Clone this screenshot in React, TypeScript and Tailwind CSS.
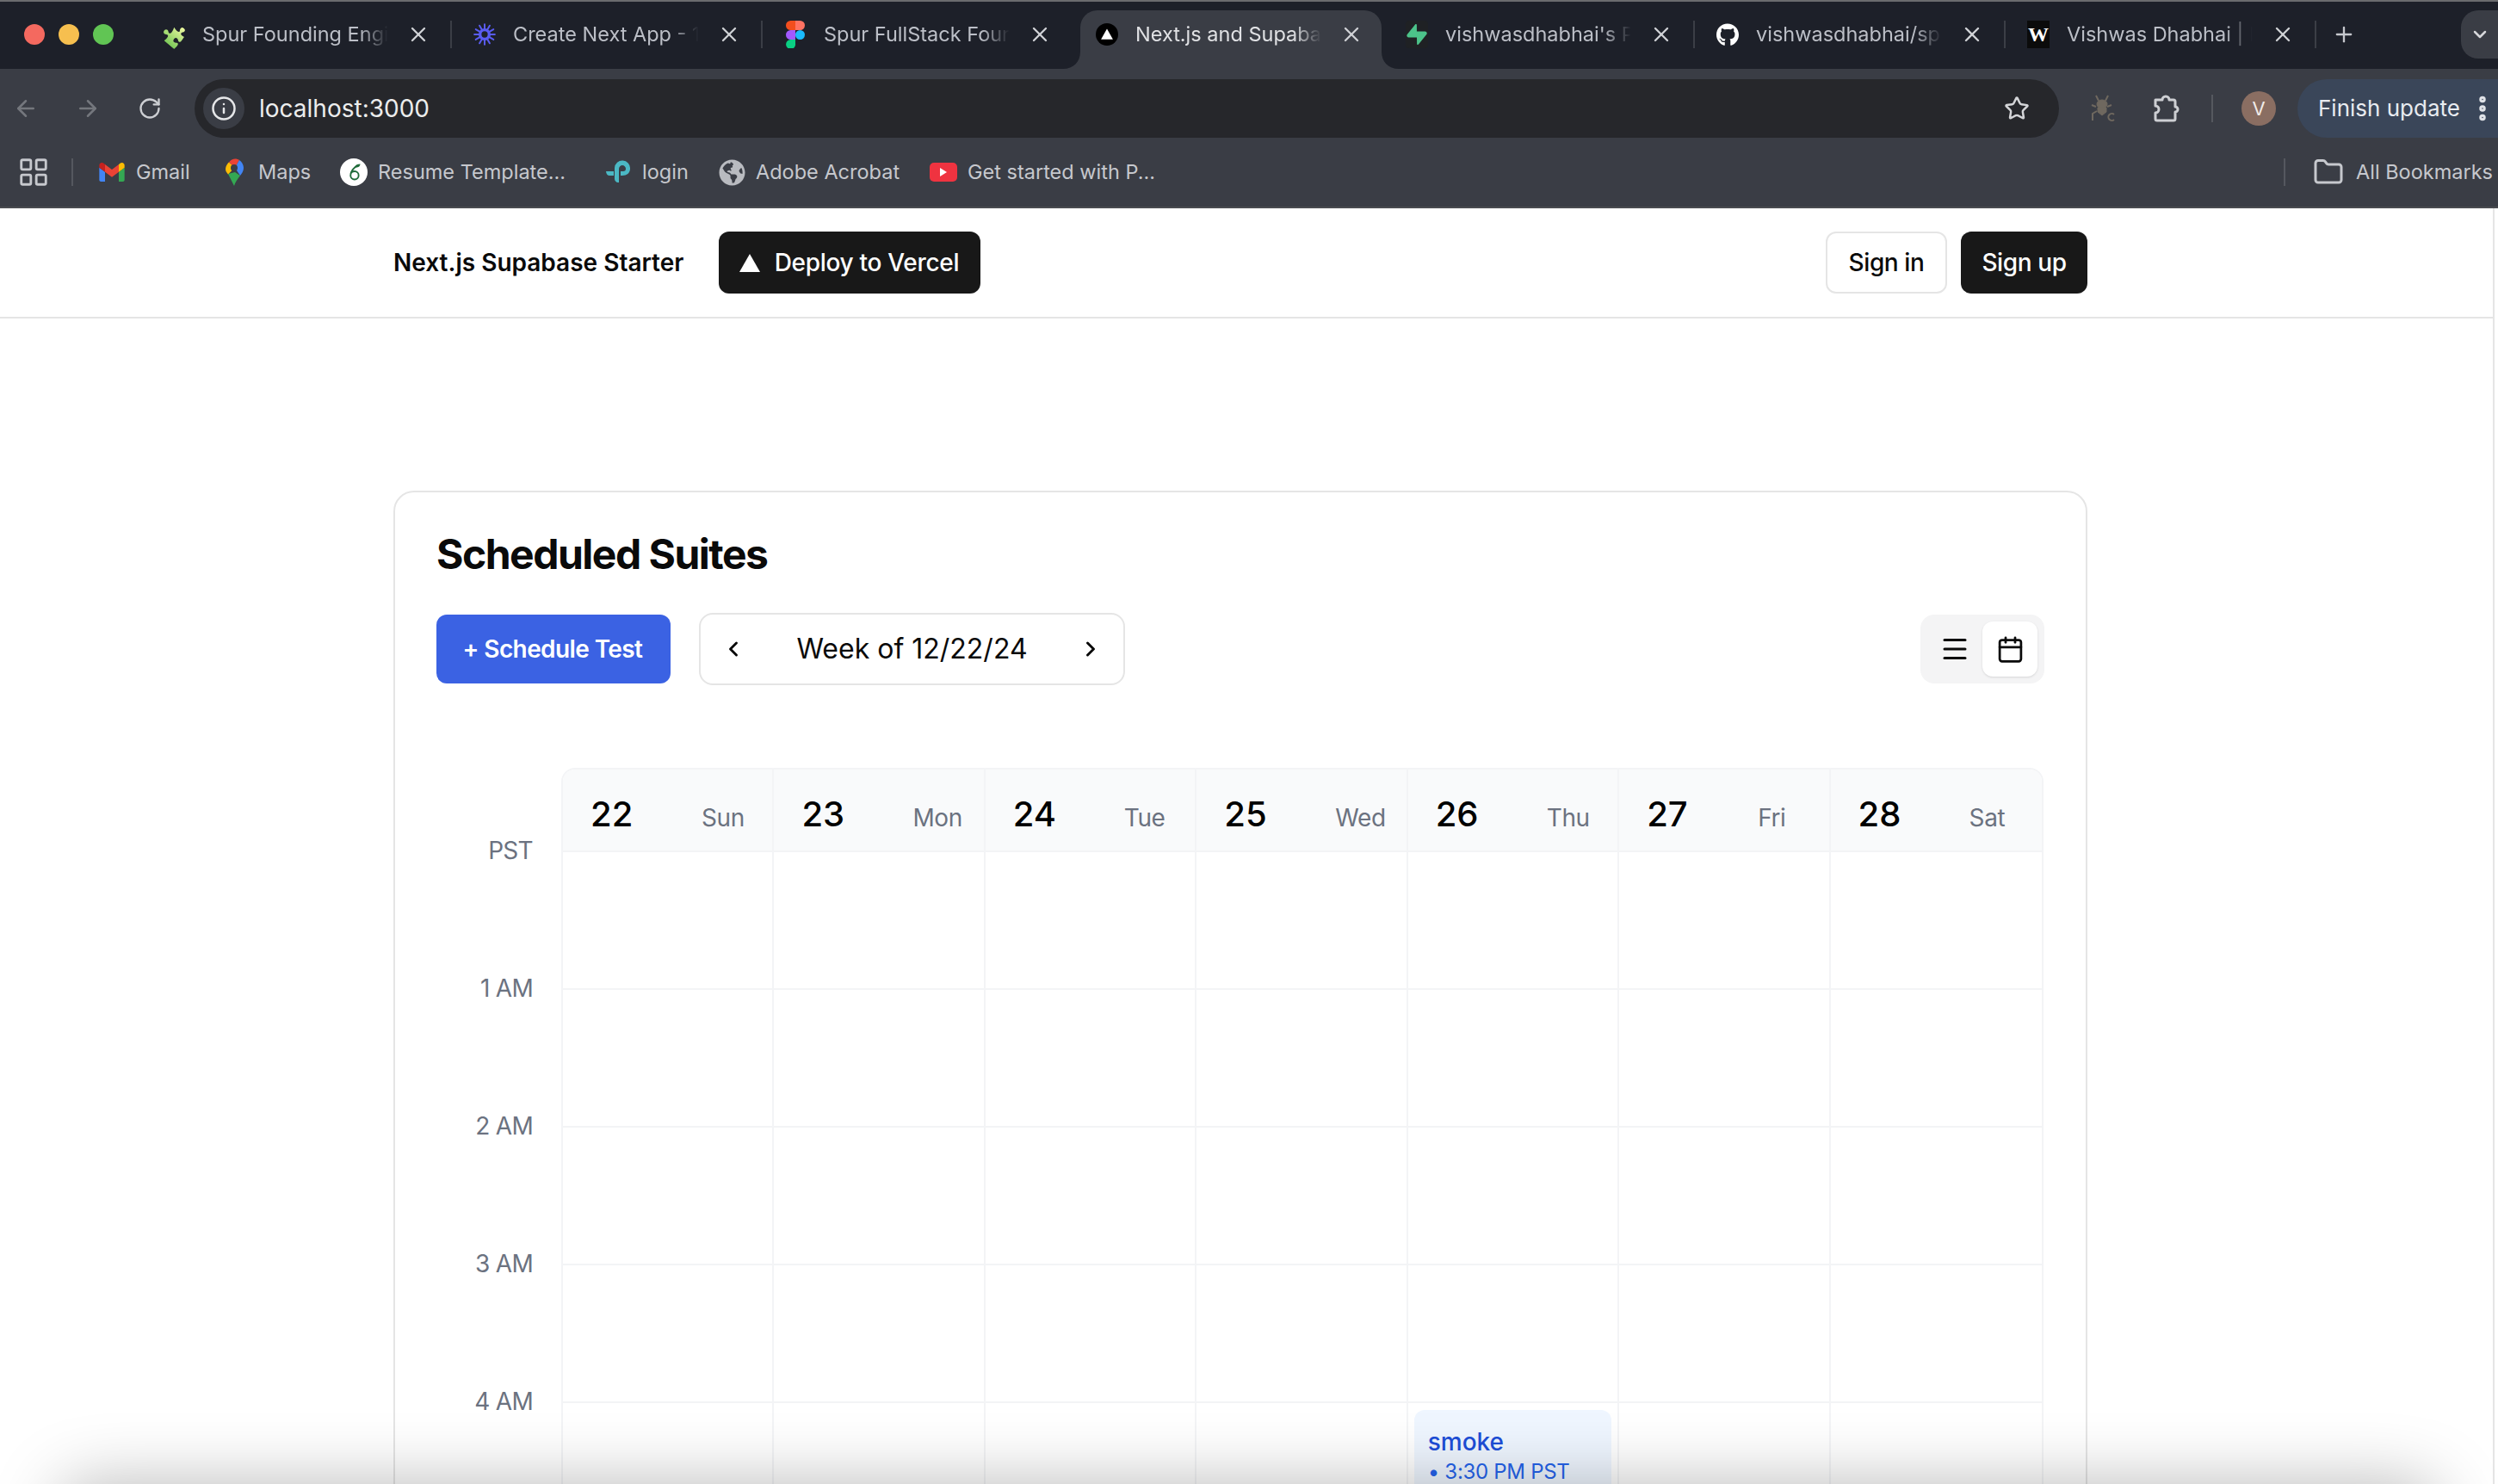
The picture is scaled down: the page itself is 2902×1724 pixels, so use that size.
import React from 'react';
import { ArrowLeft, ArrowRight, Calendar, ChevronDown, ChevronLeft, ChevronRight, EllipsisVertical, Folder, Info, LayoutGrid, Menu, Plus, RotateCw, Star, X } from 'lucide-react';
import { FaGithub, FaGlobeAmericas, FaPuzzlePiece } from 'react-icons/fa';
import { SiSupabase } from 'react-icons/si';

const SpurIcon = () => <FaPuzzlePiece size={36} fill="url(#spurGrad)" className="-rotate-[50deg]" />;

const SunIcon = () => (
  <svg width="36" height="36" viewBox="0 0 34 34" stroke="#5a5cf2" strokeWidth="2.600" strokeLinecap="round">
    {[0, 30, 60, 90, 120, 150, 180, 210, 240, 270, 300, 330].map((a) => (
      <line key={a} x1="17" y1="1.500" x2="17" y2="10" transform={`rotate(${a} 17 17)`} />
    ))}
    <circle cx="17" cy="17" r="7" fill="none" strokeWidth="4.500" />
  </svg>
);

const FigmaIcon = () => (
  <svg width="22" height="32" viewBox="0 0 22 32">
    <path fill="#f24e1e" d="M11 0H5.500a5.500 5.500 0 0 0 0 11H11z" />
    <path fill="#ff7262" d="M11 0h5.500a5.500 5.500 0 0 1 0 11H11z" />
    <path fill="#a259ff" d="M11 11H5.500a5.500 5.500 0 0 0 0 11H11z" />
    <circle fill="#1abcfe" cx="16.500" cy="16.500" r="5.500" />
    <path fill="#0acf83" d="M5.500 22H11v4.500a5.500 5.500 0 1 1-5.500-4.500z" />
  </svg>
);

const VercelCircle = () => (
  <svg width="32" height="32" viewBox="0 0 32 32">
    <circle cx="16" cy="16" r="16" fill="#000" />
    <path d="M16 8l8.500 15h-17z" fill="#fff" />
  </svg>
);

const SupabaseIcon = () => (
  <span className="flex h-[32px] w-[32px] items-center justify-center rounded-[4px] bg-[#1f2124]">
    <SiSupabase size={24} color="#4cc38a" />
  </span>
);

const WixIcon = () => (
  <span className="flex h-[32px] w-[32px] items-center justify-center bg-[#0b0b0b] text-[24px] font-bold leading-none text-white [font-family:'Liberation_Serif',serif]">W</span>
);

const GmailIcon = () => (
  <svg width="30" height="22" viewBox="52 42 88 66">
    <path fill="#4285f4" d="M58 108h14V74L52 59v43c0 3.320 2.690 6 6 6" />
    <path fill="#34a853" d="M120 108h14c3.320 0 6-2.690 6-6V59l-20 15" />
    <path fill="#fbbc04" d="M120 48v26l20-15v-8c0-7.420-8.470-11.650-14.400-7.200" />
    <path fill="#ea4335" d="M72 74V48l24 18 24-18v26L96 92" />
    <path fill="#c5221f" d="M52 51v8l20 15V48l-5.600-4.200c-5.940-4.450-14.400-.22-14.400 7.200" />
  </svg>
);

const MapsIcon = () => (
  <svg width="22" height="32" viewBox="0 0 22 32">
    <path fill="#34a853" d="M4 18l7 14c1-4 4-8 7-12l-6-4z" />
    <path fill="#fbbc04" d="M1.500 15c.6 1.200 1.500 2.400 2.500 3.500l8-8-7-6C2.500 6.500 0 11 1.500 15z" />
    <path fill="#ea4335" d="M5 4.500L12 11l5-9C13.500-.5 8 0 5 4.500z" />
    <path fill="#4285f4" d="M17 2l-5 9 6 9c2-2.500 4-5.500 4-9 0-3.500-2-7-5-9z" />
    <circle cx="11" cy="11" r="4" fill="#3a3d45" />
  </svg>
);

const ResumeIcon = () => (
  <svg width="34" height="34" viewBox="0 0 34 34">
    <circle cx="17" cy="17" r="17" fill="#fff" />
    <path d="M22 9c-5 2-9 7-9 12a5 5 0 1 0 5-5c-2 0-4 1-5 3" fill="none" stroke="#1f6b3a" strokeWidth="2" />
    <path d="M18 11c1-3 4-4 7-4 0 3-3 5-7 4z" fill="#1f6b3a" />
  </svg>
);

const LoginIcon = () => (
  <svg width="28" height="28" viewBox="0 0 28 28" fill="#4bb8c4">
    <path d="M10 9a9 9 0 0 1 18 1c0 5-4 8-9 8h-2v-5h3c2 0 3-1 3-3s-2-4-4-4-4 2-4 4v16h-1c-2 0-4-2-4-4V9z" />
    <path d="M0 13h9v5H4c-2 0-4-2-4-5z" />
  </svg>
);

const YoutubeIcon = () => (
  <span className="flex h-[22px] w-[32px] items-center justify-center rounded-[5px] bg-[#ef3340]">
    <span className="h-0 w-0 border-y-[5px] border-l-[8px] border-y-transparent border-l-white" />
  </span>
);

const BugIcon = () => (
  <svg width="28" height="32" viewBox="0 0 28 32" fill="#6f685f" stroke="#6f685f">
    <ellipse cx="13" cy="11" rx="6" ry="5" />
    <path d="M8 15h10v5l-5 4-5-4z" />
    <path d="M9 7L6 1M17 7l3-6M6 14L1 12M7 19l-5 3v8M19 14l5-2" fill="none" strokeWidth="2" />
    <path d="M27 23a4 4 0 1 0 0 6" fill="none" strokeWidth="2" />
  </svg>
);

const ExtensionIcon = () => (
  <svg width="32" height="34" viewBox="0 0 32 34" fill="none" stroke="#cdcfd3" strokeWidth="3" strokeLinejoin="round">
    <path d="M4 7h8a4 4 0 0 1 8 0h5a2 2 0 0 1 2 2v6a3 3 0 0 1 0 6v8a2 2 0 0 1-2 2H6a2 2 0 0 1-2-2v-7a4 4 0 0 0 0-8z" />
  </svg>
);

const tabs = [
  { title: 'Spur Founding Engineer', icon: <SpurIcon />, sep: true },
  { title: 'Create Next App - 127.0', icon: <SunIcon />, sep: true },
  { title: 'Spur FullStack Founding', icon: <FigmaIcon />, sep: false },
  { title: 'Next.js and Supabase Starter', icon: <VercelCircle />, sep: false, active: true },
  { title: "vishwasdhabhai's Project", icon: <SupabaseIcon />, sep: true },
  { title: 'vishwasdhabhai/spur-assign', icon: <FaGithub size={33} color="#fff" />, sep: true },
  { title: 'Vishwas Dhabhai | Portfolio', icon: <WixIcon />, sep: true },
];

const bookmarks = [
  { label: 'Gmail', icon: <GmailIcon />, cls: 'w-[142px]' },
  { label: 'Maps', icon: <MapsIcon />, cls: 'w-[139px]' },
  { label: 'Resume Template...', icon: <ResumeIcon />, cls: 'w-[307px]' },
  { label: 'login', icon: <LoginIcon />, cls: 'w-[132px]' },
  { label: 'Adobe Acrobat', icon: <FaGlobeAmericas size={31} color="#b9bbc0" />, cls: 'w-[246px]' },
  { label: 'Get started with P...', icon: <YoutubeIcon />, cls: 'w-[280px]' },
];

const days = [
  { n: 22, d: 'Sun' },
  { n: 23, d: 'Mon' },
  { n: 24, d: 'Tue' },
  { n: 25, d: 'Wed' },
  { n: 26, d: 'Thu' },
  { n: 27, d: 'Fri' },
  { n: 28, d: 'Sat' },
];

const hours = ['1 AM', '2 AM', '3 AM', '4 AM'];

const BrowserChrome = () => (
  <div className="[font-family:Inter,sans-serif]">
    <div className="flex h-[80px] border-t-2 border-[#6a6b6e] bg-[#1d2029]">
      <div className="flex h-[76px] w-[164px] shrink-0 items-center gap-[16px] pl-[28px]">
        <span className="h-[24px] w-[24px] rounded-full bg-[#f4695f]" />
        <span className="h-[24px] w-[24px] rounded-full bg-[#f6bf4f]" />
        <span className="h-[24px] w-[24px] rounded-full bg-[#61c554]" />
      </div>
      {tabs.map((t) => (
        <div
          key={t.title}
          className={
            t.active
              ? 'relative mt-[10px] ml-[8px] mr-[3px] flex h-[68px] w-[350px] shrink-0 items-start rounded-t-[20px] bg-[#3a3d45] pl-[18px]'
              : 'relative mt-[10px] flex h-[68px] w-[361px] shrink-0 items-start pl-[25px]'
          }
        >
          {t.active && (
            <>
              <svg className="absolute bottom-0 left-[-20px]" width="20" height="20" viewBox="0 0 20 20"><path d="M20 0v20H0c12 0 20-8 20-20z" fill="#3a3d45" /></svg>
              <svg className="absolute bottom-0 right-[-20px]" width="20" height="20" viewBox="0 0 20 20"><path d="M0 0v20h20C8 20 0 12 0 0z" fill="#3a3d45" /></svg>
            </>
          )}
          <div className="flex h-[56px] w-full items-center">
            <span className="flex w-[26px] shrink-0 items-center justify-center">{t.icon}</span>
            <span className={`ml-[20px] w-[218px] shrink-0 overflow-hidden whitespace-nowrap text-[23.500px] leading-[32px] [mask-image:linear-gradient(to_right,black_84%,transparent_99%)] ${t.active ? 'text-[#e0e1e4]' : 'text-[#bcbfc7]'}`}>{t.title}</span>
            <span className="ml-[19px] flex w-[28px] shrink-0 items-center justify-center">
              <X size={28} strokeWidth={2} color="#d0d2d6" />
            </span>
            {t.sep && <span className="ml-auto h-[32px] w-[2px] bg-[#3b3e46]" />}
          </div>
        </div>
      ))}
      <div className="mt-[10px] ml-[18px] flex h-[56px] w-[28px] items-center justify-center">
        <Plus size={30} strokeWidth={2} color="#c6c8cd" />
      </div>
      <div className="mt-[10px] ml-auto flex h-[56px] w-[43px] items-center justify-center rounded-l-[20px] bg-[#3a3d45]">
        <ChevronDown size={24} strokeWidth={2.500} color="#d6d7da" />
      </div>
    </div>

    <div className="flex h-[80px] items-center bg-[#3a3d45] pt-[12px]">
      <ArrowLeft size={30} strokeWidth={2} color="#74777d" className="ml-[15px] shrink-0" />
      <ArrowRight size={30} strokeWidth={2} color="#74777d" className="ml-[42px] shrink-0" />
      <RotateCw size={28} strokeWidth={2} color="#cdcfd3" className="ml-[43px] shrink-0" />
      <div className="ml-[38px] flex h-[68px] w-[2166px] shrink-0 items-center rounded-full bg-[#26272b] pl-[10px] pr-[34px]">
        <span className="flex h-[48px] w-[48px] items-center justify-center rounded-full bg-[#3a3d45]">
          <Info size={30} strokeWidth={2} color="#e6e7e9" />
        </span>
        <span className="ml-[17px] text-[28px] leading-[36px] text-[#eceded]">localhost:3000</span>
        <Star size={30} strokeWidth={2} color="#d4d5d8" className="ml-auto" />
      </div>
      <span className="ml-[37px] flex w-[28px] shrink-0 justify-center"><BugIcon /></span>
      <span className="ml-[42px] flex w-[34px] shrink-0 justify-center"><ExtensionIcon /></span>
      <span className="ml-[36px] h-[32px] w-[2px] shrink-0 bg-[#55585f]" />
      <span className="ml-[33px] flex h-[40px] w-[40px] shrink-0 items-center justify-center rounded-full bg-[#8a6e62] text-[22px] text-[#f1ebe8]">V</span>
      <div className="ml-[25px] flex h-[68px] flex-1 items-center rounded-l-full bg-[#3a4659] pl-[24px]">
        <span className="whitespace-nowrap text-[26px] leading-[36px] text-[#e8ebf0]">Finish update</span>
        <EllipsisVertical size={36} strokeWidth={3} color="#e0e3e8" className="ml-[8px] shrink-0" />
      </div>
    </div>

    <div className="flex h-[82px] items-center border-b-2 border-[#494b50] bg-[#3a3d45] pl-[20px]">
      <LayoutGrid size={38} strokeWidth={1.800} color="#c6c8cd" />
      <span className="ml-[25px] mr-[29px] h-[32px] w-[2px] bg-[#55585f]" />
      {bookmarks.map((b) => (
        <div key={b.label} className={`flex shrink-0 items-center ${b.cls}`}>
          <span className="flex w-[32px] shrink-0 items-center justify-center">{b.icon}</span>
          <span className="ml-[12px] whitespace-nowrap text-[23.500px] leading-[32px] text-[#c6c8cd]">{b.label}</span>
        </div>
      ))}
      <span className="ml-auto h-[32px] w-[2px] bg-[#55585f]" />
      <Folder size={36} strokeWidth={2} color="#c6c8cd" className="ml-[32px]" />
      <span className="ml-[14px] mr-[6px] whitespace-nowrap text-[23.500px] leading-[32px] text-[#c6c8cd]">All Bookmarks</span>
    </div>
  </div>
);

const Navbar = () => (
  <nav className="h-[128px] border-b-2 border-[#e5e5e5]">
    <div className="ml-[457px] flex h-[126px] w-[1968px] items-center">
      <span className="text-[28px] font-semibold text-[#0a0a0a]">Next.js Supabase Starter</span>
      <button className="ml-[41px] flex h-[72px] w-[304px] items-center justify-center gap-[17px] rounded-[12px] bg-[#181818] pr-[2px] text-[28px] font-medium tracking-[-0.3px] text-white">
        <span className="h-0 w-0 border-x-[12px] border-b-[21px] border-x-transparent border-b-white" />
        Deploy to Vercel
      </button>
      <button className="ml-auto h-[72px] w-[141px] rounded-[12px] border-2 border-[#e5e5e5] bg-white text-[28px] font-medium tracking-[-0.4px] text-[#0a0a0a]">Sign in</button>
      <button className="ml-[16px] h-[72px] w-[147px] rounded-[12px] bg-[#181818] text-[28px] font-medium tracking-[-0.4px] text-white">Sign up</button>
    </div>
  </nav>
);

const CalendarGrid = () => (
  <div className="mt-[96px] flex">
    <div className="w-[145px] shrink-0 pr-[33px] pt-[78px] text-right text-[28px] leading-[36px] tracking-[-0.7px] text-[#6b7280]">
      <div className="h-[160px]">PST</div>
      {hours.map((h) => (
        <div key={h} className="h-[160px]">{h}</div>
      ))}
    </div>
    <div className="w-[1722px] overflow-hidden rounded-t-[16px] border-x-2 border-t-2 border-[#f3f4f6]">
      <div className="grid h-[96px] grid-cols-7 border-b-2 border-[#f3f4f6] bg-[#f9fafb]">
        {days.map((d, i) => (
          <div key={d.n} className={`flex items-baseline pl-[32px] pt-[28px] ${i < 6 ? 'border-r-2 border-[#f3f4f6]' : ''}`}>
            <span className="w-[129px] shrink-0 text-[40px] font-[450] leading-[48px] text-black">{d.n}</span>
            <span className="text-[28px] leading-[36px] tracking-[-0.4px] text-[#6b7280]">{d.d}</span>
          </div>
        ))}
      </div>
      {[0, 1, 2, 3, 4].map((r) => (
        <div key={r} className="grid h-[160px] grid-cols-7 border-b-2 border-[#f3f4f6]">
          {days.map((d, i) => (
            <div key={d.n} className={`px-[7px] pt-[8px] ${i < 6 ? 'border-r-2 border-[#f3f4f6]' : ''}`}>
              {r === 4 && d.n === 26 && (
                <div className="h-[140px] rounded-[12px] bg-[#eff6ff] px-[16px] pt-[19px]">
                  <div className="text-[28px] font-medium leading-[36px] text-[#1d4ed8]">smoke</div>
                  <div className="text-[24px] leading-[34px] tracking-[-0.3px] text-[#2563eb]">• 3:30 PM PST</div>
                </div>
              )}
            </div>
          ))}
        </div>
      ))}
    </div>
  </div>
);

const ScheduledSuites = () => (
  <section className="ml-[457px] mt-[200px] w-[1968px] rounded-t-[24px] border-2 border-[#e5e5e5] px-[48px] pt-[40px]">
    <h1 className="text-[48px] font-bold leading-[64px] tracking-[-1.500px] text-[#0a0a0a]">Scheduled Suites</h1>
    <div className="mt-[36px] flex h-[84px] items-center">
      <button className="h-[80px] w-[272px] rounded-[12px] bg-[#3b62e3] pr-[2px] text-[28px] font-semibold tracking-[-0.6px] text-white">+ Schedule Test</button>
      <div className="ml-[33px] flex h-[84px] w-[495px] items-center justify-between rounded-[16px] border-2 border-[#e5e5e5] px-[24px]">
        <ChevronLeft size={28} strokeWidth={2.500} color="#0a0a0a" />
        <span className="text-[32px] leading-[40px] text-[#0a0a0a]">Week of 12/22/24</span>
        <ChevronRight size={28} strokeWidth={2.500} color="#0a0a0a" />
      </div>
      <div className="ml-auto flex h-[80px] w-[144px] items-center rounded-[16px] bg-[#f4f4f5] pl-[8px]">
        <span className="flex h-[64px] w-[64px] items-center justify-center"><Menu size={36} strokeWidth={2} color="#0a0a0a" /></span>
        <span className="flex h-[64px] w-[64px] items-center justify-center rounded-[12px] bg-white shadow-sm"><Calendar size={33} strokeWidth={2} color="#0a0a0a" /></span>
      </div>
    </div>
    <CalendarGrid />
  </section>
);

export default function App() {
  return (
    <div className="relative h-[1724px] w-[2902px] overflow-hidden bg-white [font-family:Inter,sans-serif]">
      <svg width="0" height="0" className="absolute">
        <defs>
          <linearGradient id="spurGrad" x1="0" y1="0" x2="1" y2="0">
            <stop offset="0" stopColor="#7cc95a" />
            <stop offset="1" stopColor="#eef9a0" />
          </linearGradient>
        </defs>
      </svg>
      <BrowserChrome />
      <div className="h-[1482px] w-[2898px] border-r-2 border-[#e5e5e5]">
        <Navbar />
        <ScheduledSuites />
      </div>
      {/* window shadow creeping in along the bottom edge */}
      <div className="absolute left-[70px] right-[70px] top-[1724px] h-[100px] rounded-[30px] shadow-[0_0_80px_rgba(0,0,0,0.28)]" />
    </div>
  );
}
